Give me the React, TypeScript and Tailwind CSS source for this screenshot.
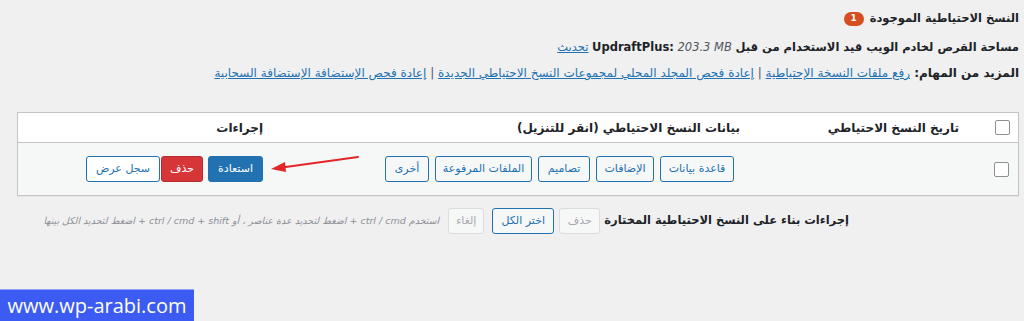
import React from "react";

const font = { fontFamily: '"DejaVu Sans", Tahoma, sans-serif' };

function Box() {
  return <span className="block w-[15px] h-[15px] border border-[#8c8f94] bg-white rounded-[2px]" />;
}

function OBtn({ w, children }: { w: string; children: React.ReactNode }) {
  return (
    <span className={`${w} h-[26px] flex items-center justify-center border border-[#2271b1] text-[#2271b1] bg-[#f6f7f7] rounded-[3px] text-[11px]`}>
      {children}
    </span>
  );
}

export default function App() {
  return (
    <div dir="rtl" style={font} className="relative w-[1024px] h-[321px] bg-[#f0f0f1] overflow-hidden text-[#1d2327]">
      <div className="pr-[5px] pl-[17px]">
        <div className="h-[38px] flex items-center gap-[6px]">
          <h2 className="text-[11.5px] font-bold">النسخ الاحتياطية الموجودة</h2>
          <span className="w-[20px] h-[14px] rounded-full bg-[#d54e21] text-white text-[9px] font-bold flex items-center justify-center">1</span>
        </div>
        <div className="h-[20px] flex items-center text-[11.5px]">
          <p>
            <strong>مساحة القرص لخادم الويب قيد الاستخدام من قبل</strong>{" "}
            <span dir="ltr" className="inline-block">
              <strong>UpdraftPlus:</strong> <em className="text-[#50575e]">203.3 MB</em>
            </span>{" "}
            <a className="text-[#2271b1] underline">تحديث</a>
          </p>
        </div>
        <div className="h-[20px] mt-[5px] flex items-center text-[12px]">
          <p>
            <strong>المزيد من المهام: </strong>
            <a className="text-[#2271b1] underline">رفع ملفات النسخة الإحتياطية</a>
            <span className="text-[#50575e]"> | </span>
            <a className="text-[#2271b1] underline">إعادة فحص المجلد المحلي لمجموعات النسخ الاحتياطي الجديدة</a>
            <span className="text-[#50575e]"> | </span>
            <a className="text-[#2271b1] underline">إعادة فحص الإستضافة الإستضافة السحابية</a>
          </p>
        </div>

        <div className="mt-[29px] border border-[#c3c4c7] bg-white shadow-[0_1px_1px_rgba(0,0,0,0.04)]">
          <div className="grid grid-cols-[50px_218px_477px_1fr] h-[30px] items-center border-b border-[#c3c4c7] text-[12px] font-bold">
            <div className="flex pr-[8px]"><Box /></div>
            <div className="pr-[9px]">تاريخ النسخ الاحتياطي</div>
            <div className="pr-[10px]">بيانات النسخ الاحتياطي (انقر للتنزيل)</div>
            <div className="pr-[10px]">إجراءات</div>
          </div>
          <div className="grid grid-cols-[50px_218px_477px_1fr] h-[52px] items-center bg-[#f6f7f7]">
            <div className="flex pr-[9px]"><Box /></div>
            <div />
            <div className="flex gap-[6px] pr-[16px]">
              <OBtn w="w-[74px]">قاعدة بيانات</OBtn>
              <OBtn w="w-[58px]">الإضافات</OBtn>
              <OBtn w="w-[52px]">تصاميم</OBtn>
              <OBtn w="w-[97px]">الملفات المرفوعة</OBtn>
              <OBtn w="w-[44px]">أخرى</OBtn>
            </div>
            <div className="flex pr-[10px]">
              <span className="w-[55px] h-[26px] flex items-center justify-center bg-[#2271b1] border border-[#2271b1] text-white rounded-[3px] text-[11px]">استعادة</span>
              <span className="w-[42px] h-[26px] mr-[5px] flex items-center justify-center bg-[#d63638] border border-[#b32d2e] text-white rounded-[3px] text-[11px]">حذف</span>
              <span className="w-[74px] h-[26px] mr-[1px] flex items-center justify-center bg-white border border-[#2271b1] text-[#2271b1] rounded-[3px] text-[11px]">سجل عرض</span>
            </div>
          </div>
        </div>

        <div className="mt-[12px] h-[26px] flex items-center pr-[170px]">
          <span className="text-[11.5px] font-bold">إجراءات بناء على النسخ الاحتياطية المختارة</span>
          <span className="mr-[4px] w-[41px] h-[26px] flex items-center justify-center bg-[#f6f7f7] border border-[#dcdcde] text-[#a7aaad] rounded-[3px] text-[11px]">حذف</span>
          <span className="mr-[5px] w-[62px] h-[26px] flex items-center justify-center bg-[#f6f7f7] border border-[#2271b1] text-[#2271b1] rounded-[3px] text-[11px]">اختر الكل</span>
          <span className="mr-[8px] w-[36px] h-[26px] flex items-center justify-center bg-[#f6f7f7] border border-[#dcdcde] text-[#a7aaad] rounded-[3px] text-[11px]">إلغاء</span>
          <em className="mr-[9px] text-[9.5px] text-[#8c8f94]">استخدم ctrl / cmd + اضغط لتحديد عدة عناصر ، أو ctrl / cmd + shift + اضغط لتحديد الكل بينها</em>
        </div>
      </div>

      <svg className="absolute left-0 top-0" width="1024" height="321" viewBox="0 0 1024 321">
        <line x1="358" y1="157" x2="282" y2="167.5" stroke="#e3262b" strokeWidth="2" strokeLinecap="round" />
        <polygon points="271,169 285,162 286,172" fill="#e3262b" />
      </svg>

      <div dir="ltr" className="absolute left-0 bottom-0 w-[194px] h-[32px] bg-[#3b5bf2] border-t border-[#8fa2f7] flex items-center justify-center text-white text-[20px]" style={{ fontFamily: '"Open Sans", sans-serif' }}>
        www.wp-arabi.com
      </div>
    </div>
  );
}
